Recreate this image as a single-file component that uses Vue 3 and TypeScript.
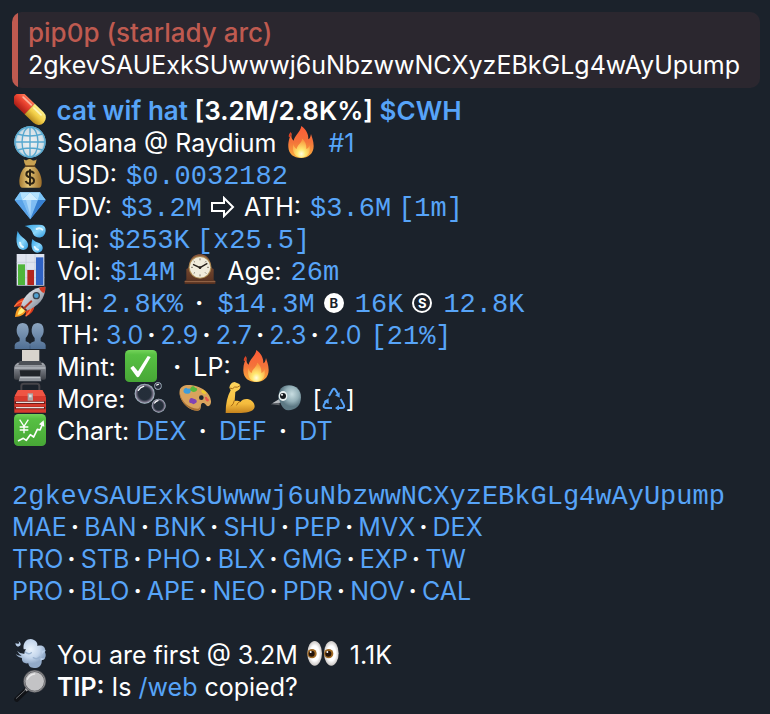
<script setup lang="ts">
interface ToolLink {
  icon: string
  label: string
}

const address = '2gkevSAUExkSUwwwj6uNbzwwNCXyzEBkGLg4wAyUpump'

const holders: string[] = ['3.0', '2.9', '2.7', '2.3', '2.0']
const charts: string[] = ['DEX', 'DEF', 'DT']

const tools: ToolLink[] = [
  { icon: 'bubbles', label: 'Bubble map' },
  { icon: 'palette', label: 'Artwork' },
  { icon: 'arm', label: 'Strength' },
  { icon: 'bird', label: 'Bird search' },
]

const bots: string[][] = [
  ['MAE', 'BAN', 'BNK', 'SHU', 'PEP', 'MVX', 'DEX'],
  ['TRO', 'STB', 'PHO', 'BLX', 'GMG', 'EXP', 'TW'],
  ['PRO', 'BLO', 'APE', 'NEO', 'PDR', 'NOV', 'CAL'],
]
</script>

<template>
  <svg class="sprite" aria-hidden="true">
    <defs>
      <linearGradient id="g-red" x1="0" y1="0" x2="0" y2="1"><stop offset="0" stop-color="#ff7a58" /><stop offset=".45" stop-color="#ea4330" /><stop offset="1" stop-color="#a91d16" /></linearGradient>
      <linearGradient id="g-yellow" x1="0" y1="0" x2="0" y2="1"><stop offset="0" stop-color="#fff08a" /><stop offset=".5" stop-color="#f3cf48" /><stop offset="1" stop-color="#b98a1e" /></linearGradient>
      <linearGradient id="g-green" x1="0" y1="0" x2="0" y2="1"><stop offset="0" stop-color="#74d35a" /><stop offset=".15" stop-color="#57c043" /><stop offset="1" stop-color="#47a736" /></linearGradient>
      <radialGradient id="g-globe"><stop offset="0" stop-color="#f4f3f2" /><stop offset=".8" stop-color="#d3dfe6" /><stop offset="1" stop-color="#8fc4dd" /></radialGradient>
      <linearGradient id="g-bag"><stop offset="0" stop-color="#a57a32" /><stop offset=".4" stop-color="#e6c779" /><stop offset="1" stop-color="#9b6d29" /></linearGradient>
      <linearGradient id="g-drop" x1="0" y1="0" x2="1" y2="1"><stop offset="0" stop-color="#2f9fe4" /><stop offset=".55" stop-color="#8ed8fb" /><stop offset="1" stop-color="#2b97de" /></linearGradient>
      <linearGradient id="g-wood" x1="0" y1="0" x2="0" y2="1"><stop offset="0" stop-color="#8d5a3c" /><stop offset="1" stop-color="#55301f" /></linearGradient>
      <linearGradient id="g-rocket" x1="0" y1="0" x2="1" y2="1"><stop offset="0" stop-color="#f5f7fa" /><stop offset=".5" stop-color="#b9c0c9" /><stop offset="1" stop-color="#626b77" /></linearGradient>
      <linearGradient id="g-flame" x1="0" y1="0" x2="0" y2="1"><stop offset="0" stop-color="#ff5b36" /><stop offset=".5" stop-color="#f3733a" /><stop offset="1" stop-color="#fbb03c" /></linearGradient>
      <radialGradient id="g-core" cx=".5" cy=".8" r=".7"><stop offset="0" stop-color="#fffde0" /><stop offset=".35" stop-color="#ffe870" /><stop offset="1" stop-color="#f9993f" /></radialGradient>
      <linearGradient id="g-person" x1="0" y1="0" x2="0" y2="1"><stop offset="0" stop-color="#8ca5c0" /><stop offset="1" stop-color="#506f94" /></linearGradient>
      <linearGradient id="g-metal" x1="0" y1="0" x2="0" y2="1"><stop offset="0" stop-color="#a9adb3" /><stop offset=".5" stop-color="#6c7077" /><stop offset="1" stop-color="#3f4248" /></linearGradient>
      <radialGradient id="g-bubble"><stop offset=".6" stop-color="#3b4a5c" stop-opacity=".3" /><stop offset=".85" stop-color="#9a8da6" stop-opacity=".8" /><stop offset="1" stop-color="#b5d4dc" /></radialGradient>
      <linearGradient id="g-skin" x1="0" y1="0" x2="0" y2="1"><stop offset="0" stop-color="#ffd75e" /><stop offset=".7" stop-color="#f5bc3d" /><stop offset="1" stop-color="#c5831e" /></linearGradient>
      <radialGradient id="g-bird" cx=".6" cy=".35"><stop offset="0" stop-color="#c8dde1" /><stop offset=".6" stop-color="#94b0b8" /><stop offset="1" stop-color="#5e7a85" /></radialGradient>
      <radialGradient id="g-cloud" cx=".5" cy=".35"><stop offset="0" stop-color="#eaf3fc" /><stop offset=".6" stop-color="#c4d6ec" /><stop offset="1" stop-color="#92aac8" /></radialGradient>
      <radialGradient id="g-eye"><stop offset=".6" stop-color="#ffffff" /><stop offset="1" stop-color="#c9c5c2" /></radialGradient>

      <symbol id="pill" viewBox="0 0 96 96">
        <g transform="rotate(44 47 45)">
          <path d="M47 23H9a22 22 0 0 0 0 44h38z" fill="url(#g-red)" />
          <path d="M47 23h37a22 22 0 0 1 0 44H47z" fill="url(#g-yellow)" />
          <path d="M8 33h34" stroke="#ffd0bd" stroke-width="5" stroke-linecap="round" opacity=".75" />
          <path d="M54 34h30" stroke="#fffbd0" stroke-width="5" stroke-linecap="round" opacity=".8" />
        </g>
      </symbol>

      <symbol id="globe" viewBox="0 0 96 96">
        <circle cx="48" cy="48" r="47" fill="url(#g-globe)" />
        <g fill="none" stroke="#57a8cf" stroke-width="4">
          <circle cx="48" cy="48" r="45" />
          <ellipse cx="48" cy="48" rx="24" ry="45" />
          <path d="M48 3v90M3 48h90M11 24q37 12 74 0M11 72q37-12 74 0" />
        </g>
      </symbol>

      <symbol id="moneybag" viewBox="0 0 96 96">
        <path d="M34 26C12 44 12 88 24 89h52c12-1 10-45-14-63z" fill="url(#g-bag)" />
        <path d="M29 4q7 5 11 1 8-5 14 1 7 4 14-2-1 12-8 20H36Q30 16 29 4z" fill="#c9a252" />
        <path d="M34 24h28" stroke="#6c4a1c" stroke-width="5" stroke-linecap="round" />
        <path d="M60 47q-3-7-12-7-11 0-11 9 0 7 11 9 12 2 12 10 0 9-12 9-10 0-13-8M48 34v49" fill="none" stroke="#2c2213" stroke-width="6" />
      </symbol>

      <symbol id="diamond" viewBox="0 0 96 96">
        <path d="M18 7h60l17 23-46 58L2 30z" fill="#56a8ea" />
        <path d="M18 7L2 30h22zM78 7l17 23H72z" fill="#7cc4f6" />
        <path d="M18 7h30L24 30zM78 7H48l24 23z" fill="#b4e2fd" />
        <path d="M48 7L24 30h48z" fill="#d3effe" />
        <path d="M24 30h48L49 88z" fill="#7fbdf3" />
        <path d="M2 30h22l25 58z" fill="#5ba3e8" />
        <path d="M36 30h16l-3 46z" fill="#a9d6f9" />
        <path d="M72 30h23L49 88z" fill="#377fd0" />
      </symbol>

      <symbol id="sweat" viewBox="0 0 96 96">
        <path d="M32 12C48 8 66 8 84 9c14 3 14 24 4 33-9 8-26 5-31-7C53 23 46 16 32 12z" fill="url(#g-drop)" />
        <path d="M11 27c-4 14-5 31-1 43 4 14 20 18 29 9 8-10 1-22-8-29-9-6-16-13-20-23z" fill="url(#g-drop)" />
        <path d="M55 51c-3 12-4 22 0 31 5 11 18 13 27 6 8-8 4-19-5-24-10-4-17-7-22-13z" fill="url(#g-drop)" />
        <path d="M68 21q10-5 17 2M18 62q1 10 9 13M62 75q3 7 10 8" fill="none" stroke="#e5f8ff" stroke-width="6" stroke-linecap="round" />
      </symbol>

      <symbol id="bars" viewBox="0 0 96 96">
        <path d="M8 0h83v95H8z" fill="#dfe4ef" />
        <path d="M8 25h83M8 48h83M8 71h83M36 0v95M63 0v95" stroke="#c1c9d9" stroke-width="2" />
        <path d="M12 31h21v62H12z" fill="#4fb53b" />
        <path d="M40 48h20v45H40z" fill="#b3261f" />
        <path d="M66 10h22v83H66z" fill="#2f62c4" />
      </symbol>

      <symbol id="clock" viewBox="0 0 96 96">
        <path d="M2 90v-9l5-4V45q8-2 8-12C18 12 31 1 48 1s30 11 33 32q0 10 8 12v32l5 4v9z" fill="url(#g-wood)" />
        <path d="M2 83h92" stroke="#9a6a4b" stroke-width="3" />
        <circle cx="48" cy="40" r="34" fill="#ad8c54" />
        <circle cx="48" cy="40" r="31" fill="#f1ecdc" />
        <path d="M48 13v6M48 61v6M21 40h6M69 40h6M29 21l4 4M67 21l-4 4M29 59l4-4M67 59l-4-4" stroke="#514a40" stroke-width="2" />
        <path d="M27 31l21 10 22-13" fill="none" stroke="#27211c" stroke-width="4" />
        <circle cx="48" cy="41" r="4" fill="#27211c" />
      </symbol>

      <symbol id="rocket" viewBox="0 0 96 96">
        <path d="M22 60C8 66 5 78 3 93c16 0 28-6 34-20z" fill="#f79a20" />
        <path d="M23 65C15 71 12 80 11 87c10-2 17-6 21-14z" fill="#fff17d" />
        <path d="M1 62q7-23 32-27l8 9-19 17zM35 91q25-8 27-33l-9-7-17 21z" fill="#d93a1e" />
        <path d="M1 62q14-17 32-18M35 91q18-16 18-34" fill="none" stroke="#ff7c3e" stroke-width="4" />
        <path d="M20 62C30 24 58 3 94 2c1 35-22 60-58 73z" fill="url(#g-rocket)" />
        <path d="M75 5q10-3 19-3 1 10-3 19Q80 18 75 5z" fill="#d23a25" />
        <circle cx="67" cy="29" r="11" fill="#38434f" />
        <circle cx="67" cy="29" r="7" fill="#4fa0cf" />
        <path d="M22 60l16 14" stroke="#5b2c22" stroke-width="5" />
        <path d="M31 66l21-20" stroke="#b7361f" stroke-width="6" stroke-linecap="round" />
      </symbol>

      <symbol id="people" viewBox="0 0 96 96">
        <path d="M2 93V82q1-9 15-12V60Q7 50 8 34 10 15 26 15t18 19q1 16-9 26v10q13 3 14 12v11z" fill="url(#g-person)" />
        <path d="M47 93V82q1-9 15-12V60q-10-10-9-26 2-19 18-19t18 19q1 16-9 26v10q14 3 15 12v11z" fill="url(#g-person)" />
        <path d="M48 82v11" stroke="#3b5678" stroke-width="2" />
      </symbol>

      <symbol id="printer" viewBox="0 0 96 96">
        <path d="M24 0h52v42H24z" fill="#d8d4cd" />
        <path d="M11 38h76q9 6 9 18v27q0 6-6 6H6q-6 0-6-6V56q0-12 11-18z" fill="url(#g-metal)" />
        <path d="M17 33h63l4 12H13z" fill="#4d5157" />
        <path d="M2 54h92" stroke="#b7bcc2" stroke-width="4" />
        <path d="M17 61h63l-3 24H20z" fill="#202429" />
        <path d="M18 79h61l3 15H14z" fill="#8c9197" />
        <path d="M18 83h61" stroke="#c1c5c9" stroke-width="3" />
      </symbol>

      <symbol id="toolbox" viewBox="0 0 96 96">
        <path d="M22 26V12q0-7 8-7h38q8 0 8 7v14" fill="none" stroke="#454449" stroke-width="6" />
        <path d="M12 24h73l11 22v46H1V46z" fill="#d73a2e" />
        <path d="M12 24h73l10 18H2z" fill="#ef5544" />
        <path d="M2 62h92M2 78h92" stroke="#731c1a" stroke-width="8" />
        <path d="M6 61h84M6 77h84" stroke="#e5dedd" stroke-width="4" />
        <path d="M41 34h16v22H41z" fill="#a9a5a5" />
        <path d="M45 38h8v8h-8z" fill="#e2dddd" />
      </symbol>

      <symbol id="uptrend" viewBox="0 0 96 96">
        <rect width="96" height="96" rx="13" fill="url(#g-green)" />
        <path d="M17 17l13 20 13-20M30 37v21M17 39h26M17 48h26" fill="none" stroke="#fff" stroke-width="4" />
        <path d="M12 81l16-8 9 6 12-17 10 7 11-23 8 2 9-21" fill="none" stroke="#fff" stroke-width="5" stroke-linejoin="round" />
        <path d="M75 31l14-12 2 19z" fill="#fff" />
      </symbol>

      <symbol id="check" viewBox="0 0 96 96">
        <rect width="96" height="96" rx="13" fill="url(#g-green)" />
        <path d="M16 54l9-7 14 17L68 18l9 3-34 58q-5 6-9 0z" fill="#fff" />
      </symbol>

      <symbol id="fire" viewBox="0 0 96 96">
        <path d="M49 0c-2 17-20 28-23 44-8-5-8-16-4-25-7 10-13 27-12 44 1 21 16 33 38 33s38-13 38-36c0-16-6-28-8-36-2 10-4 14-8 16C71 25 63 9 49 0z" fill="url(#g-flame)" />
        <path d="M18 17q-7 6-7 14 1 4 5 1 4-7 2-15z" fill="#e34224" />
        <path d="M52 38c-3 15-15 17-17 31-5-2-9-8-10-15-5 21 4 41 24 41 22 0 29-18 24-37-2 8-5 10-9 11 1-14-4-24-12-31z" fill="url(#g-core)" />
      </symbol>

      <symbol id="bubbles" viewBox="0 0 96 96">
        <g fill="url(#g-bubble)">
          <circle cx="32" cy="35" r="30" />
          <circle cx="72" cy="12" r="11" />
          <circle cx="74" cy="71" r="21" />
        </g>
        <path d="M13 25q6-10 16-12M62 63q4-6 10-7M68 9l5-2" fill="none" stroke="#fff" stroke-width="4" stroke-linecap="round" />
      </symbol>

      <symbol id="palette" viewBox="0 0 96 96">
        <path d="M2 26C4 12 20 7 40 10c29 4 54 23 56 47 1 14-8 20-15 12-5-7-13-8-15 0-1 9 0 17-11 17C26 86-2 53 2 26z" fill="#d9a35d" />
        <path d="M2 31c4 29 28 48 53 49 8 0 7-5 8-8 1 8-1 14-8 14C29 86 1 57 2 31z" fill="#a86e32" />
        <circle cx="67" cy="47" r="7" fill="#202730" />
        <path d="M14 23q6-10 12-3 12-2 9 7-1 10-11 8-13-1-10-12z" fill="#3d9ddc" />
        <path d="M35 17q8-8 13 0 10 1 5 9-9 7-16 1-6-3-2-10z" fill="#57b93f" />
        <path d="M66 27q7-7 10 0 9 4 3 9-9 2-13-9z" fill="#f0cb2e" />
        <path d="M31 54q3-10 13-4 11 2 9 11-9 9-15 3-10 0-7-10z" fill="#8142b4" />
        <path d="M77 46q6-4 8 3 8 5 3 9-7 3-11-12z" fill="#e8574e" />
      </symbol>

      <symbol id="arm" viewBox="0 0 96 96">
        <path d="M5 93c0-28 5-50 15-68l-4-8Q18 2 32 0l14 6q7 9-1 17l-11 7-2 27c5-2 12-1 17 3 10-16 42-10 43 13 0 14-19 20-41 20z" fill="url(#g-skin)" />
        <path d="M19 19q8 4 13-4 8 3 15-3M31 56q-2 11-9 16M47 59q-7 3-9 10" fill="none" stroke="#a86c18" stroke-width="3" stroke-linecap="round" />
      </symbol>

      <symbol id="bird" viewBox="0 0 96 96">
        <path d="M28 55L2 67l27 3z" fill="#5e6369" />
        <path d="M29 50L7 64l25-2z" fill="#b8bcc0" />
        <path d="M25 48C26 22 36 10 57 10c23 0 36 15 36 36 0 24-16 39-38 39-10 0-17-7-21-16z" fill="url(#g-bird)" />
        <ellipse cx="39" cy="42" rx="13" ry="15" fill="#e9f1f1" />
        <circle cx="39" cy="42" r="9" fill="#15191d" />
        <circle cx="36" cy="38" r="3" fill="#fff" />
      </symbol>

      <symbol id="wind" viewBox="0 0 96 96">
        <path d="M29 34c-4-22 14-37 31-28 9 4 11 11 10 18 16-5 27 5 23 19 5 10 1 21-10 24 2 16-11 24-23 23-11 0-16-6-17-14-13 2-21-5-19-16-8-1-15-5-19-12q8 7 18 5-9-5-14-15 9 10 22 9 0-7 5-13z" fill="url(#g-cloud)" />
        <path d="M4 16q16 5 9-8 15 13-1 18-6 0-8-10zM83 39l13-3-12 12M80 60l14 2-15 6" fill="#b9cee7" />
        <path d="M34 42q9 9 18 2M58 59q11 7 19-2" fill="none" stroke="#9bb3d0" stroke-width="4" stroke-linecap="round" />
      </symbol>

      <symbol id="magnifier" viewBox="0 0 96 96">
        <path d="M37 60L8 88" stroke="#111317" stroke-width="15" stroke-linecap="round" />
        <path d="M33 61L7 85" stroke="#6c6e72" stroke-width="3" stroke-linecap="round" />
        <path d="M42 54l-7 7" stroke="#a9a9ab" stroke-width="9" />
        <circle cx="62" cy="34" r="31" fill="#c3c3c5" stroke="#595a5e" stroke-width="6" />
        <circle cx="62" cy="34" r="31" fill="none" stroke="#a8a8aa" stroke-width="2" />
        <path d="M40 28q7-15 22-16" fill="none" stroke="#e8e8e9" stroke-width="4" stroke-linecap="round" />
      </symbol>

      <symbol id="eyes" viewBox="0 0 96 96">
        <ellipse cx="23" cy="46" rx="22" ry="37" fill="url(#g-eye)" />
        <ellipse cx="73" cy="46" rx="22" ry="37" fill="url(#g-eye)" />
        <circle cx="15" cy="47" r="14" fill="#a06a24" />
        <circle cx="65" cy="47" r="14" fill="#a06a24" />
        <circle cx="14" cy="47" r="9" fill="#24140a" />
        <circle cx="64" cy="47" r="9" fill="#24140a" />
        <circle cx="11" cy="42" r="3" fill="#fff" />
        <circle cx="61" cy="42" r="3" fill="#fff" />
      </symbol>
    </defs>
  </svg>

  <main class="message">
    <blockquote class="quote">
      <p class="line author">pip0p (starlady arc)</p>
      <p class="line">{{ address }}</p>
    </blockquote>

    <section class="stats">
      <p class="line strong title"><svg class="emoji"><use href="#pill" /></svg> <a href="#token">cat wif hat</a> [3.2M/2.8K%] <a href="#cwh">$CWH</a></p>
      <p class="line"><svg class="emoji"><use href="#globe" /></svg> Solana @ Raydium <svg class="emoji"><use href="#fire" /></svg> <a href="#rank">#1</a></p>
      <p class="line"><svg class="emoji"><use href="#moneybag" /></svg> USD: <code>$0.0032182</code></p>
      <p class="line"><svg class="emoji"><use href="#diamond" /></svg> FDV: <code>$3.2M</code> <svg class="arrow" viewBox="0 0 24 22"><path d="M1 7h12V2l9 9-9 9v-5H1z" /></svg> ATH: <code>$3.6M</code> <code>[1m]</code></p>
      <p class="line"><svg class="emoji"><use href="#sweat" /></svg> Liq: <code>$253K</code> <code>[x25.5]</code></p>
      <p class="line"><svg class="emoji"><use href="#bars" /></svg> Vol: <code>$14M</code> <svg class="emoji"><use href="#clock" /></svg> Age: <code>26m</code></p>
      <p class="line"><svg class="emoji"><use href="#rocket" /></svg> 1H: <code>2.8K%</code> <span class="dot">·</span> <code>$14.3M</code> <span class="badge filled">B</span> <code>16K</code> <span class="badge">S</span> <code>12.8K</code></p>
      <p class="line"><svg class="emoji"><use href="#people" /></svg> TH: <template v-for="(share, i) in holders" :key="share"><span v-if="i" class="dot tight">·</span><a href="#holders">{{ share }}</a></template> <code>[21%]</code></p>
      <p class="line"><svg class="emoji"><use href="#printer" /></svg> Mint: <svg class="emoji"><use href="#check" /></svg> <span class="dot">·</span> LP: <svg class="emoji"><use href="#fire" /></svg></p>
      <p class="line"><svg class="emoji"><use href="#toolbox" /></svg> More: <template v-for="tool in tools" :key="tool.icon"><a href="#more" :aria-label="tool.label"><svg class="emoji"><use :href="'#' + tool.icon" /></svg></a> {{ ' ' }}</template>[<a href="#refresh" aria-label="Refresh"><svg class="recycle" viewBox="0 0 72 69"><g fill="none" stroke="#57a4f8" stroke-width="6"><path d="M21 27L32 8q4-5 8 0l8 13" /><path d="M56 36l10 19q2 8-6 8H49" /><path d="M30 63H11q-8-1-6-8l7-13" /></g><path d="M53 32l-14-7 14-9zM51 54v18l-12-9zM5 43l15-9v17z" fill="#57a4f8" /></svg></a>]</p>
      <p class="line"><svg class="emoji"><use href="#uptrend" /></svg> Chart: <template v-for="(chart, i) in charts" :key="chart"><span v-if="i">{{ ' ' }}<span class="dot">·</span>{{ ' ' }}</span><a href="#chart">{{ chart }}</a></template></p>
    </section>

    <section class="stats">
      <p class="line"><code class="full">{{ address }}</code></p>
      <p v-for="(row, r) in bots" :key="r" class="line"><template v-for="(bot, i) in row" :key="bot"><span v-if="i" class="dot tight">·</span><a href="#bot">{{ bot }}</a></template></p>
    </section>

    <section class="stats">
      <p class="line"><svg class="emoji"><use href="#wind" /></svg> You are first @ 3.2M <svg class="emoji"><use href="#eyes" /></svg> 1.1K</p>
      <p class="line"><svg class="emoji"><use href="#magnifier" /></svg> <b>TIP:</b> Is <a href="#web">/web</a> copied?</p>
    </section>
  </main>
</template>

<style>
body {
  margin: 0;
  background: #1b222b;
}
</style>

<style scoped>
.sprite {
  position: absolute;
  width: 0;
  height: 0;
}

.message {
  box-sizing: border-box;
  padding: 12px 10px 11px 12px;
  color: #fff;
  font-family: Inter, "Liberation Sans", sans-serif;
  font-size: 25px;
  line-height: 32px;
}

.quote {
  margin: 0 0 7px;
  padding: 5px 8px 7px 16px;
  border-radius: 10px;
  background: linear-gradient(to right, #bf5a50 6px, #2b272f 6px);
  overflow-wrap: anywhere;
}

.line {
  margin: 0;
}

.author,
.title {
  font-size: 26px;
}

.author {
  color: #bf5a50;
  font-weight: 500;
}

.stats + .stats {
  margin-top: 32px;
}

.strong,
b {
  font-weight: 600;
}

a,
code {
  color: #57a4f8;
  text-decoration: none;
}

code {
  margin-left: 2px;
  font-family: "Liberation Mono", "DejaVu Sans Mono", monospace;
  font-size: 27px;
  line-height: 1;
}

code + code,
.full {
  margin-left: 0;
}

.emoji {
  width: 32px;
  height: 32px;
  margin: -4px 4px -4px 2px;
  vertical-align: -2px;
}

.arrow {
  width: 24px;
  height: 22px;
  margin: 0 2px;
  vertical-align: -2px;
  fill: none;
  stroke: #fff;
  stroke-width: 2;
}

.recycle {
  width: 24px;
  height: 23px;
  vertical-align: -2px;
}

.dot {
  padding: 0 5px;
  font-weight: 700;
}

.tight {
  padding: 0 5px 0 4px;
}

.badge {
  display: inline-block;
  box-sizing: border-box;
  width: 20px;
  height: 20px;
  margin: 0 2px;
  border: 2px solid #fff;
  border-radius: 50%;
  font-size: 13px;
  font-weight: 700;
  line-height: 16px;
  text-align: center;
  vertical-align: 4px;
}

.filled {
  background: #fff;
  color: #1b222b;
}
</style>
